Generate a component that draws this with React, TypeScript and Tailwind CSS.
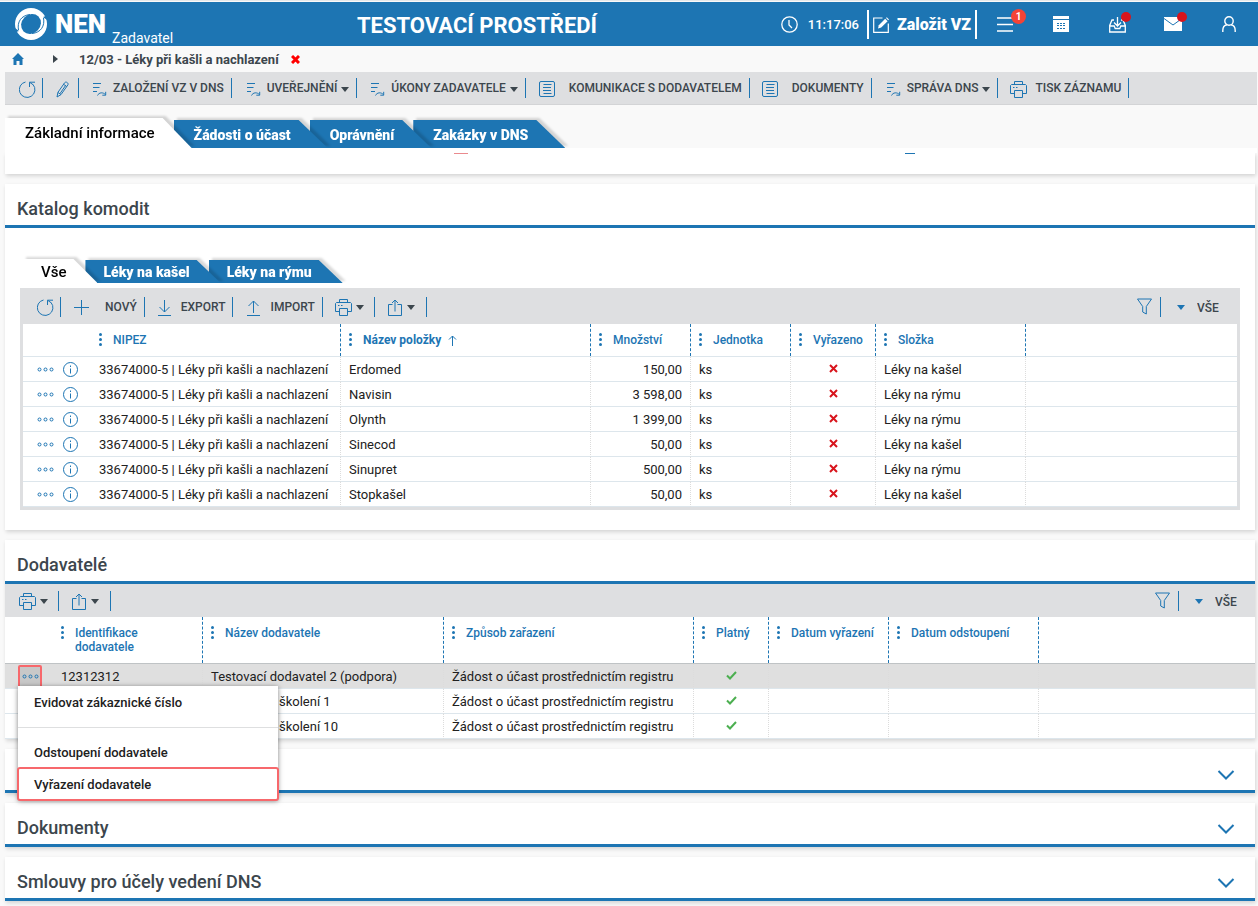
import React, { useState } from "react";
import { clsx } from "clsx";

type IconProps = { className?: string };

const stroke = {
  fill: "none",
  stroke: "currentColor",
  strokeWidth: 1,
} as const;

const RefreshIcon = () => (
  <svg width="17" height="17" viewBox="0 0 17 17" {...stroke}>
    <path d="M6.500 1A7.800 7.800 0 1 0 14 3.500" />
    <path d="M10.500 6V1.200H16M10.800 1.400l3.400 2.400" />
  </svg>
);

const PencilIcon = () => (
  <svg width="13" height="17" viewBox="0 0 13 17" {...stroke}>
    <path d="M1 16l.9-4.600L8.700 1.700c1.200-1.600 4.200.3 3.200 2.200L5 13.600 1 16zM7.600 3.300l3 2.200M9.700 4.300L4 12.600M1.900 11.400L5 13.600" />
  </svg>
);

const FlowIcon = () => (
  <svg width="14" height="15" viewBox="0 0 14 15" {...stroke}>
    <path d="M0 1.500h8M0 5.500h6.500M0 9.500h4" />
    <path d="M4.500 13.500c1.500-3.200 5.500-3.600 8-.8M12.700 9.800v3.400H9.300" />
  </svg>
);

const ListIcon = () => (
  <svg width="16" height="16" viewBox="0 0 16 16" {...stroke}>
    <rect x=".5" y=".5" width="15" height="15" rx="1.500" />
    <path d="M4.500 3.500h8M4 6.500h8M4 9.500h8M4.500 12.500h8" />
  </svg>
);

const PrinterIcon = () => (
  <svg width="17" height="17" viewBox="0 0 17 17" {...stroke}>
    <path d="M4.500 3.500v-3h8v3M4.500 12.500h-4v-8l1-1h14l1 1v8h-4" />
    <path d="M4.500 9.500h8v7h-8zM3 6.500h1.500M6 6.500h1.500" />
  </svg>
);

const ShareIcon = () => (
  <svg width="14" height="17" viewBox="0 0 14 17" {...stroke}>
    <path d="M4.500 5.500h-4v11h13v-11h-4M7 12.500V1.200M4 4l3-3 3 3" />
  </svg>
);

const PlusIcon = () => (
  <svg width="15" height="15" viewBox="0 0 15 15" {...stroke}>
    <path d="M7.500 0v15M0 7.500h15" />
  </svg>
);

const DownloadIcon = () => (
  <svg width="13" height="16" viewBox="0 0 13 16" {...stroke}>
    <path d="M6.500 0v12M1.500 7l5 5 5-5M0 15.500h13" />
  </svg>
);

const UploadIcon = () => (
  <svg width="13" height="16" viewBox="0 0 13 16" {...stroke}>
    <path d="M6.500 13V1M1.500 6l5-5 5 5M0 15.500h13" />
  </svg>
);

const FilterIcon = () => (
  <svg width="15" height="17" viewBox="0 0 15 17" {...stroke}>
    <path d="M.5 1h14L9.300 8.500v7.500l-3.600-2V8.500z" />
  </svg>
);

const Caret = ({ className }: IconProps) => (
  <svg width="8" height="5" viewBox="0 0 8 5" fill="currentColor" className={className}>
    <path d="M0 0h8L4 5z" />
  </svg>
);

const Cross = ({ className }: IconProps) => (
  <svg width="9" height="9" viewBox="0 0 9 9" fill="none" stroke="currentColor" className={className}>
    <path d="M1 1l7 7M8 1L1 8" />
  </svg>
);

const Check = () => (
  <svg width="11" height="9" viewBox="0 0 11 9" fill="none" stroke="#4caf50" strokeWidth="2" className="mx-auto mb-1">
    <path d="M1 4.500l3 3L10 1" />
  </svg>
);

const InfoIcon = () => (
  <svg width="15" height="15" viewBox="0 0 15 15" {...stroke}>
    <circle cx="7.500" cy="7.500" r="7" />
    <path d="M7.500 6.500v5M7.500 3.500v1.500" />
  </svg>
);

const MoreIcon = () => (
  <svg width="17" height="5" viewBox="0 0 17 5" {...stroke}>
    <circle cx="2.500" cy="2.500" r="1.500" />
    <circle cx="8.500" cy="2.500" r="1.500" />
    <circle cx="14.500" cy="2.500" r="1.500" />
  </svg>
);

const ColumnDots = () => (
  <svg width="3" height="13" viewBox="0 0 3 13" fill="currentColor" className="shrink-0">
    <circle cx="1.500" cy="1.500" r="1.500" />
    <circle cx="1.500" cy="6.500" r="1.500" />
    <circle cx="1.500" cy="11.500" r="1.500" />
  </svg>
);

const Logo = () => (
  <svg width="32" height="32" viewBox="0 0 32 32">
    <circle cx="16" cy="16" r="16" fill="#fff" />
    <ellipse cx="16" cy="16" rx="10.500" ry="9.300" fill="#1d75b3" transform="rotate(-45 16 16)" />
    <path d="M3.500 22C2 14 6 7.500 15 6.500" fill="none" stroke="#1d75b3" strokeWidth="1" />
    <path d="M28.500 10C30 18 26 24.500 17 25.500" fill="none" stroke="#1d75b3" strokeWidth="1" />
    <path d="M0 20l4 3-3 1zM32 12l-4-3 3-1z" fill="#1d75b3" />
  </svg>
);

function Divider() {
  return <span className="h-5 w-px shrink-0 bg-[#1d75b3]" />;
}

interface ToolProps {
  label?: string;
  title?: string;
  icon: React.ReactNode;
  caret?: boolean;
  className: string;
}

function Tool({ label, title, icon, caret, className }: ToolProps) {
  return (
    <>
      <button type="button" aria-label={title} className={clsx("flex h-8 shrink-0 items-center whitespace-nowrap", className)}>
        <span className="mt-0.5 text-[#1d75b3]">{icon}</span>
        {label && <span>{label}</span>}
        {caret && <Caret className={clsx("mt-0.5", label ? "-ml-0.5" : "")} />}
      </button>
      <Divider />
    </>
  );
}

function FilterTools({ id }: { id: string }) {
  return (
    <div className="ml-auto flex items-center">
      <button type="button" aria-label="Filtr" className="pr-2 text-[#1d75b3]">
        <FilterIcon />
      </button>
      <Divider />
      <label htmlFor={id} className="flex items-center gap-3 pl-4 pt-0.5">
        <Caret className="text-[#1d75b3]" />
        <select id={id} aria-label="Pohled" className="appearance-none bg-transparent">
          <option>VŠE</option>
        </select>
      </label>
    </div>
  );
}

interface TabsProps {
  tabs: string[];
  small?: boolean;
}

function Tabs({ tabs, small }: TabsProps) {
  const [active, setActive] = useState(0);

  return (
    <div role="tablist" className="flex items-end">
      {tabs.map((tab, i) => (
        <div
          key={tab}
          className={clsx("relative drop-shadow-[3px_-2px_1px_rgba(0,0,0,0.15)]", i > 0 && (small ? "-ml-3" : "-ml-[18px]"))}
          style={{ zIndex: i === active ? 10 : 9 - i }}
        >
          <button
            type="button"
            role="tab"
            aria-selected={i === active}
            onClick={() => setActive(i)}
            className={clsx(
              "block whitespace-nowrap",
              small
                ? "pl-[18px] pr-[31px] [clip-path:polygon(0_0,calc(100%-24px)_0,100%_100%,0_100%)]"
                : "pl-5 pr-[37px] [clip-path:polygon(0_0,calc(100%-29px)_0,100%_100%,0_100%)]",
              i === active
                ? "bg-white text-[15px] font-medium text-black"
                : "bg-[#1d75b3] text-sm font-black text-white",
              !small && i !== active && "pt-0.5",
              small ? (i === active ? "h-6 pt-0.5" : "h-[23px]") : i === active ? "h-[30px]" : "h-7"
            )}
          >
            {tab}
          </button>
        </div>
      ))}
    </div>
  );
}

interface Column {
  label: string;
  width: string;
  sorted?: boolean;
}

function HeadRow({ columns, tall }: { columns: Column[]; tall?: boolean }) {
  return (
    <thead className="text-[12px] leading-[14px] text-[#1d75b3]">
      <tr>
        <th className={clsx("border-b", tall ? "h-[47px] w-12 border-[#bfc3c5]" : "h-[33px] w-[68px] border-[#dde6ec]")} />
        {columns.map((col) => (
          <th
            key={col.label}
            className={clsx(
              "relative border-b px-2 pt-[9px] text-left align-top font-medium after:absolute after:inset-y-0 after:right-0 after:border-r after:border-dashed after:border-[#1d75b3]",
              tall ? "border-[#bfc3c5]" : "border-[#dde6ec]",
              col.width
            )}
          >
            <div className={clsx("flex gap-[11px]", col.sorted && "font-bold")}>
              <ColumnDots />
              <span>{col.label}</span>
              {col.sorted && (
                <svg width="9" height="11" viewBox="0 0 9 11" {...stroke} className="-ml-1 mt-0.5">
                  <path d="M4.500 11V1M1 4.500l3.500-3.500L8 4.500" />
                </svg>
              )}
            </div>
          </th>
        ))}
        <th className={clsx("border-b", tall ? "border-[#bfc3c5]" : "border-[#dde6ec]")} />
      </tr>
    </thead>
  );
}

const cell = "h-[25px] truncate border-b border-b-[#dde6ec] border-r border-r-[#dcdcdc] [border-right-style:dotted] px-2 pt-0.5";

const itemColumns: Column[] = [
  { label: "NIPEZ", width: "w-[250px]" },
  { label: "Název položky", width: "w-[250px]", sorted: true },
  { label: "Množství", width: "w-[100px]" },
  { label: "Jednotka", width: "w-[100px]" },
  { label: "Vyřazeno", width: "w-[85px]" },
  { label: "Složka", width: "w-[150px]" },
];

const items = [
  { name: "Erdomed", amount: "150,00", folder: "Léky na kašel" },
  { name: "Navisin", amount: "3 598,00", folder: "Léky na rýmu" },
  { name: "Olynth", amount: "1 399,00", folder: "Léky na rýmu" },
  { name: "Sinecod", amount: "50,00", folder: "Léky na kašel" },
  { name: "Sinupret", amount: "500,00", folder: "Léky na rýmu" },
  { name: "Stopkašel", amount: "50,00", folder: "Léky na kašel" },
];

const supplierColumns: Column[] = [
  { label: "Identifikace dodavatele", width: "w-[150px]" },
  { label: "Název dodavatele", width: "w-[241px]" },
  { label: "Způsob zařazení", width: "w-[250px]" },
  { label: "Platný", width: "w-[75px]" },
  { label: "Datum vyřazení", width: "w-[120px]" },
  { label: "Datum odstoupení", width: "w-[150px]" },
];

const suppliers = [
  { id: "12312312", name: "Testovací dodavatel 2 (podpora)" },
  { id: "", name: "Dodavatelé školení 1" },
  { id: "", name: "Dodavatelé školení 10" },
];

function ItemsTable() {
  return (
    <table className="w-full table-fixed border-separate border-spacing-0 bg-white text-[13px] leading-5 text-[#212121]">
      <HeadRow columns={itemColumns} />
      <tbody>
        {items.map((item) => (
          <tr key={item.name}>
            <td className="h-[25px] border-b border-[#dde6ec] p-0">
              <div className="flex items-center gap-[9px] pl-3.5 text-[#1d75b3]">
                <button type="button" aria-label="Akce"><MoreIcon /></button>
                <button type="button" aria-label="Detail"><InfoIcon /></button>
              </div>
            </td>
            <td className={cell}>33674000-5 | Léky při kašli a nachlazení</td>
            <td className={cell}>{item.name}</td>
            <td className={clsx(cell, "text-right")}>{item.amount}</td>
            <td className={cell}>ks</td>
            <td className={cell}><Cross className="mx-auto mb-1 text-[#d8141c] [stroke-width:2]" /></td>
            <td className={cell}>{item.folder}</td>
            <td className="border-b border-[#dde6ec]" />
          </tr>
        ))}
      </tbody>
    </table>
  );
}

function RowMenu() {
  const entry = "block h-8 w-full px-4 pt-0.5 text-left";

  return (
    <div role="menu" className="absolute left-[13px] top-[22px] z-20 w-[260px] bg-white text-[13px] font-medium text-[#212121] shadow-[0_1px_5px_rgba(0,0,0,0.5)]">
      <button type="button" role="menuitem" className={entry}>Evidovat zákaznické číslo</button>
      <hr className="my-2 mt-[9px] border-[#dedfe0]" />
      <button type="button" role="menuitem" className={entry}>Odstoupení dodavatele</button>
      <button type="button" role="menuitem" className={clsx(entry, "rounded-xs outline-2 -outline-offset-1 outline-[#f7686c]")}>
        Vyřazení dodavatele
      </button>
    </div>
  );
}

function SuppliersTable() {
  return (
    <table className="w-full table-fixed border-separate border-spacing-0 text-[13px] leading-5 text-[#212121]">
      <HeadRow columns={supplierColumns} tall />
      <tbody>
        {suppliers.map((s, i) => (
          <tr key={s.name} className={clsx(i === 0 && "bg-[#dfdfdf]")}>
            <td className="relative h-[25px] border-b border-[#dde6ec] p-0">
              {i === 0 && (
                <>
                  <button
                    type="button"
                    aria-label="Akce"
                    className="ml-[13px] flex h-[23px] w-6 items-center justify-center rounded-xs border-2 border-[#f7686c] bg-[#c8c8c8] text-[#1d75b3]"
                  >
                    <MoreIcon />
                  </button>
                  <RowMenu />
                </>
              )}
            </td>
            <td className={cell}>{s.id}</td>
            <td className={cell}>{s.name}</td>
            <td className={cell}>Žádost o účast prostřednictím registru</td>
            <td className={cell}><Check /></td>
            <td className={cell} />
            <td className={cell} />
            <td className="border-b border-[#dde6ec]" />
          </tr>
        ))}
      </tbody>
    </table>
  );
}

interface SectionProps {
  title?: string;
  collapsed?: boolean;
  children?: React.ReactNode;
}

function Section({ title, collapsed, children }: SectionProps) {
  return (
    <section className="mt-2.5 bg-white shadow-[1px_2px_4px_rgba(0,0,0,0.15)]">
      <div className="flex h-11 items-center justify-between border-b-3 border-[#1d75b3] pl-3 pr-5 pt-2">
        <h2 className="text-lg font-medium text-[#3c464d]">{title}</h2>
        {collapsed && (
          <button type="button" aria-label="Rozbalit" className="ml-auto pt-0.5 text-[#1d75b3]">
            <svg width="18" height="10" viewBox="0 0 18 10" fill="none" stroke="currentColor" strokeWidth="2">
              <path d="M1.500 1L9 8.500 16.500 1" />
            </svg>
          </button>
        )}
      </div>
      {children}
    </section>
  );
}

function TopBar() {
  return (
    <header className="mt-0.5 flex h-11 items-center bg-[#1d75b3] text-white">
      <div className="flex items-center pl-[15px]">
        <Logo />
        <span className="ml-2 text-[26px] font-black">NEN</span>
        <span className="ml-1.5 mt-7 text-sm">Zadavatel</span>
      </div>
      <h1 className="flex-1 pt-0.5 text-center text-[22px] font-bold">TESTOVACÍ PROSTŘEDÍ</h1>
      <div className="flex items-center gap-2.5 pr-2">
        <svg width="17" height="17" viewBox="0 0 17 17" fill="none" stroke="currentColor" strokeWidth="1.300">
          <circle cx="8.500" cy="8.500" r="7.700" />
          <path d="M8 4v5l3 3" />
        </svg>
        <time className="pt-0.5 text-[13px] font-medium">11:17:06</time>
      </div>
      <button type="button" className="flex h-[29px] items-center gap-2 border-x-2 border-white px-1 pt-px text-base font-black">
        <svg width="16" height="16" viewBox="0 0 16 16" fill="none" stroke="currentColor" strokeWidth="1.200">
          <path d="M9.500 1H.7v14.300h14.600V6.500" />
          <path d="M5 11.500l.8-3.300 6.400-6.400 2.400 2.400L8.200 10.600z" fill="currentColor" stroke="none" />
          <path d="M13 1l.8-.8 2.200 2.200-.8.800z" fill="currentColor" stroke="none" />
        </svg>
        Založit VZ
      </button>
      <nav className="flex items-center pr-px">
        <button type="button" aria-label="Úkoly" className="relative flex h-11 w-14 items-center justify-center">
          <svg width="16" height="15" viewBox="0 0 16 15" fill="none" stroke="currentColor" strokeWidth="1.500">
            <path d="M0 1h16M0 7.500h16M0 14h16" />
          </svg>
          <span className="absolute right-[7px] top-[7px] flex size-[15px] items-center justify-center rounded-full bg-[#f44336] text-[10px] font-bold">
            1
          </span>
        </button>
        <button type="button" aria-label="Kalendář" className="flex h-11 w-14 items-center justify-center">
          <svg width="16" height="16" viewBox="0 0 16 16" fill="currentColor">
            <path d="M0 0h16v3H0z" />
            <path
              fillRule="evenodd"
              d="M0 4h16v12H0zM4 7v1h2V7zM7 7v1h2V7zM10 7v1h2V7zM4 9v1h2V9zM7 9v1h2V9zM10 9v1h2V9zM4 12v1h2v-1zM7 12v1h2v-1zM10 12v1h2v-1z"
            />
          </svg>
        </button>
        <button type="button" aria-label="Schránka" className="relative flex h-11 w-14 items-center justify-center">
          <svg width="17" height="17" viewBox="0 0 17 17" fill="none" stroke="currentColor" strokeWidth="1.300">
            <path d="M5 4H3L.7 9.500v6.500h15.600V9.500L14 4h-2M.7 10h4.500l1 2.500h4.600l1-2.500h4.500M8.500 1v8.500M5 6.500L8.500 10 12 6.500" />
          </svg>
          <span className="absolute right-3.5 top-2.5 size-2.5 rounded-full bg-[#d8141c]" />
        </button>
        <button type="button" aria-label="Zprávy" className="relative flex h-11 w-14 items-center justify-center">
          <svg width="18" height="14" viewBox="0 0 18 14">
            <path d="M0 0h18v14H0z" fill="#fff" />
            <path d="M0 1.500l9 6.500 9-6.500" fill="none" stroke="#1d75b3" strokeWidth="1" />
          </svg>
          <span className="absolute right-3.5 top-2.5 size-2.5 rounded-full bg-[#d8141c]" />
        </button>
        <button type="button" aria-label="Profil" className="flex h-11 w-14 items-center justify-center">
          <svg width="14" height="16" viewBox="0 0 14 16" fill="none" stroke="currentColor" strokeWidth="1.400">
            <circle cx="7" cy="5" r="4.200" />
            <path d="M.8 16v-1.500c0-3 2-5.300 4.200-5.700M13.200 16v-1.500c0-3-2-5.300-4.200-5.700" />
          </svg>
        </button>
      </nav>
    </header>
  );
}

export default function App() {
  return (
    <div className="min-h-screen overflow-hidden border-t border-[#e4e8ea] bg-[#f9f9f9] font-[Roboto,sans-serif]">
      <div className="-mt-px">
        <TopBar />
      </div>

      <nav className="flex h-[26px] items-center pl-3 text-[13px] font-medium text-[#3c464d]">
        <a href="#home" aria-label="Domů" className="text-[#1d75b3]">
          <svg width="12" height="12" viewBox="0 0 12 12" fill="currentColor">
            <path d="M6 0l6 6h-1.500v6H7.500V8h-3v4H1.500V6H0z" />
          </svg>
        </a>
        <svg width="5" height="8" viewBox="0 0 5 8" fill="currentColor" className="ml-[29px]">
          <path d="M0 0l5 4-5 4z" />
        </svg>
        <a href="#record" className="ml-[21px] pt-px font-bold">12/03 - Léky při kašli a nachlazení</a>
        <button type="button" aria-label="Zavřít" className="ml-3 text-[#f00]">
          <Cross className="[stroke-width:3]" />
        </button>
      </nav>

      <div className="ml-[5px] mr-px flex h-[33px] items-center border-b border-[#d3d4d6] bg-[#dedfe1] text-[12px] font-medium text-[#3c464d]">
        <Tool className="pl-3.5 pr-1.5" title="Obnovit" icon={<RefreshIcon />} />
        <Tool className="pl-[13px] pr-[9px]" title="Upravit" icon={<PencilIcon />} />
        <Tool className="gap-1.5 pl-3.5 pr-[7px]" label="ZALOŽENÍ VZ V DNS" icon={<FlowIcon />} />
        <Tool className="gap-1.5 pl-[15px] pr-[7px]" label="UVEŘEJNĚNÍ" icon={<FlowIcon />} caret />
        <Tool className="gap-1.5 pl-3.5 pr-[7px]" label="ÚKONY ZADAVATELE" icon={<FlowIcon />} caret />
        <Tool className="gap-3.5 pl-[13px] pr-[7px]" label="KOMUNIKACE S DODAVATELEM" icon={<ListIcon />} />
        <Tool className="gap-3.5 pl-3 pr-[7px]" label="DOKUMENTY" icon={<ListIcon />} />
        <Tool className="gap-1.5 pl-[15px] pr-[7px]" label="SPRÁVA DNS" icon={<FlowIcon />} caret />
        <Tool className="gap-2 pl-3 pr-[7px]" label="TISK ZÁZNAMU" icon={<PrinterIcon />} />
      </div>

      <div className="ml-[5px] mt-[13px]">
        <Tabs tabs={["Základní informace", "Žádosti o účast", "Oprávnění", "Zakázky v DNS"]} />
        <div className="relative z-10 mr-px h-[5px] bg-white" />
      </div>

      <main className="ml-[5px] mr-[3px]">
        <div className="relative h-[21px] bg-white shadow-[1px_2px_4px_rgba(0,0,0,0.15)]">
          <span className="absolute left-[449px] top-0 h-px w-3.5 bg-[#ea8a8e]" />
          <span className="absolute left-[900px] top-0 h-px w-2.5 bg-[#1d75b3]" />
        </div>

        <Section title="Katalog komodit">
          <div className="px-[15px] pb-5 pt-[31px]">
            <div className="pl-[3px]">
              <Tabs small tabs={["Vše", "Léky na kašel", "Léky na rýmu"]} />
            </div>
            <div className="mt-[5px] border-3 border-t-0 border-[#dedfe1]">
              <div className="flex h-9 items-center bg-[#dedfe1] pr-[18px] pt-px text-[12px] font-medium text-[#3c464d]">
                <Tool className="pl-3.5 pr-1.5" title="Obnovit" icon={<RefreshIcon />} />
                <Tool className="gap-4 pl-[13px] pr-[7px]" label="NOVÝ" icon={<PlusIcon />} />
                <Tool className="gap-2.5 pl-[13px] pr-[7px]" label="EXPORT" icon={<DownloadIcon />} />
                <Tool className="gap-2.5 pl-3.5 pr-[7px]" label="IMPORT" icon={<UploadIcon />} />
                <Tool className="gap-1 pl-3 pr-[10px]" title="Tisk" icon={<PrinterIcon />} caret />
                <Tool className="gap-[5px] pl-[13px] pr-[11px]" title="Sdílet" icon={<ShareIcon />} caret />
                <FilterTools id="items-view" />
              </div>
              <ItemsTable />
            </div>
          </div>
        </Section>

        <Section title="Dodavatelé">
          <div className="flex h-[33px] items-center bg-[#dedfe1] pr-[18px] text-[12px] font-medium text-[#3c464d]">
            <Tool className="gap-1 pl-3.5 pr-[10px]" title="Tisk" icon={<PrinterIcon />} caret />
            <Tool className="gap-[5px] pl-[13px] pr-[11px]" title="Sdílet" icon={<ShareIcon />} caret />
            <FilterTools id="suppliers-view" />
          </div>
          <SuppliersTable />
        </Section>

        <Section collapsed />
        <Section title="Dokumenty" collapsed />
        <Section title="Smlouvy pro účely vedení DNS" collapsed />
      </main>
    </div>
  );
}
